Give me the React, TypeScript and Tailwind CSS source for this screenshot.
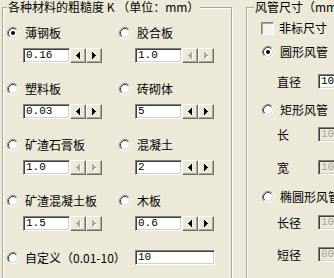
import type { ReactNode } from 'react'

const font = { fontFamily: '"Noto Sans CJK SC", "Noto Sans", sans-serif' }

function Radio({ checked }: { checked?: boolean }) {
  return (
    <svg width="12" height="12" viewBox="0 0 12 12" className="shrink-0">
      <circle cx="6" cy="6" r="5" fill="#fff" />
      <path d="M2.11 9.89A5.5 5.5 0 0 1 9.89 2.11" fill="none" stroke="#808080" />
      <path d="M9.89 2.11A5.5 5.5 0 0 1 2.11 9.89" fill="none" stroke="#fff" />
      <path d="M2.82 9.18A4.5 4.5 0 0 1 9.18 2.82" fill="none" stroke="#404040" />
      <path d="M9.18 2.82A4.5 4.5 0 0 1 2.82 9.18" fill="none" stroke="#d4d0c8" />
      {checked && <circle cx="6" cy="6" r="2" fill="#000" />}
    </svg>
  )
}

function RadioLabel({ label, checked }: { label: string; checked?: boolean }) {
  return (
    <div className="flex items-center h-[14px] text-[12px] leading-[14px] text-black whitespace-nowrap">
      <Radio checked={checked} />
      <span className="ml-[6px]">{label}</span>
    </div>
  )
}

function Arrow({ dir, on }: { dir: 'l' | 'r'; on: boolean }) {
  const cols = dir === 'l' ? [0, 1, 2, 3] : [3, 2, 1, 0]
  const draw = (fill: string, dx: number) =>
    cols.map((c, i) => (
      <rect key={fill + i} x={i + dx} y={3 - c + dx} width="1" height={c * 2 + 1} fill={fill} />
    ))
  return (
    <svg width="5" height="8" viewBox="0 0 5 8">
      {!on && draw('#fff', 1)}
      {draw(on ? '#000' : '#aca899', 0)}
    </svg>
  )
}

function SpinButton({ children }: { children: ReactNode }) {
  return (
    <div className="w-[16px] h-[15px] flex items-center justify-center bg-[#ece9d8] border border-t-white border-l-white border-b-[#716f64] border-r-[#716f64] shadow-[inset_-1px_-1px_0_#aca899]">
      {children}
    </div>
  )
}

function Box({ value, w, disabled }: { value: string; w: string; disabled?: boolean }) {
  return (
    <div
      className={`${w} h-[15px] shrink-0 flex items-center pl-[2px] border border-t-[#808080] border-l-[#808080] border-b-white border-r-white shadow-[inset_1px_1px_0_#404040,inset_-1px_-1px_0_#d4d0c8] text-[11px] leading-[13px] ${
        disabled ? 'bg-[#ece9d8] text-[#aca899]' : 'bg-white text-black'
      }`}
      style={{ fontFamily: '"Liberation Mono", monospace' }}
    >
      {value}
    </div>
  )
}

function Spinner({ value, on }: { value: string; on: boolean }) {
  return (
    <div className="flex ml-[16px] mt-[8px]">
      <Box value={value} w="w-[47px]" />
      <SpinButton>
        <Arrow dir="l" on={on} />
      </SpinButton>
      <SpinButton>
        <Arrow dir="r" on={on} />
      </SpinButton>
    </div>
  )
}

const materials = [
  [
    { label: '薄钢板', value: '0.16', on: true, checked: true },
    { label: '胶合板', value: '1.0', on: false },
  ],
  [
    { label: '塑料板', value: '0.03', on: true },
    { label: '砖砌体', value: '5', on: true },
  ],
  [
    { label: '矿渣石膏板', value: '1.0', on: false },
    { label: '混凝土', value: '2', on: true },
  ],
  [
    { label: '矿渣混凝土板', value: '1.5', on: false },
    { label: '木板', value: '0.6', on: true },
  ],
]

function SizeRow({ label, value, disabled, mt }: { label: string; value: string; disabled?: boolean; mt: string }) {
  return (
    <div className={`flex items-center h-[15px] ${mt}`}>
      <span className="w-[41px] pl-[23px] box-content shrink-0 text-[12px] leading-[14px] whitespace-nowrap">{label}</span>
      <Box value={value} w="w-[60px]" disabled={disabled} />
    </div>
  )
}

export default function App() {
  return (
    <div className="w-[334px] h-[278px] overflow-hidden bg-[#ece9d8] flex items-start text-black" style={font}>
      <fieldset className="ml-[2px] w-[230px] h-[300px] shrink-0 border border-[#aca899] shadow-[inset_1px_1px_0_#fff,1px_1px_0_#fff] pl-[4px]">
        <legend className="px-[1px] bg-[#ece9d8] text-[12px] leading-[14px] whitespace-nowrap">
          各种材料的粗糙度 K （单位：mm）
        </legend>
        <div className="pt-[12px] flex flex-col gap-y-[19px]">
          {materials.map((row, i) => (
            <div key={i} className="flex">
              {row.map((m) => (
                <div key={m.label} className="w-[112px] shrink-0">
                  <RadioLabel label={m.label} checked={m.checked} />
                  <Spinner value={m.value} on={m.on} />
                </div>
              ))}
            </div>
          ))}
          <div className="flex items-center h-[15px]">
            <div className="w-[112px] shrink-0">
              <RadioLabel label="自定义（0.01-10）" />
            </div>
            <div className="ml-[16px]">
              <Box value="10" w="w-[80px]" />
            </div>
          </div>
        </div>
      </fieldset>

      <fieldset className="ml-[14px] w-[120px] h-[300px] shrink-0 border border-[#aca899] shadow-[inset_1px_1px_0_#fff,1px_1px_0_#fff] pl-[7px]">
        <legend className="px-[1px] bg-[#ece9d8] text-[12px] leading-[14px] whitespace-nowrap">风管尺寸（mm）</legend>
        <div className="flex flex-col">
          <div className="flex items-center h-[14px] mt-[7px] pl-[7px] text-[12px] leading-[14px]">
            <div className="w-[13px] h-[13px] shrink-0 border border-t-[#808080] border-l-[#808080] border-b-white border-r-white shadow-[inset_1px_1px_0_#aca899] bg-[#f4f3ee]" />
            <span className="ml-[5px]">非标尺寸</span>
          </div>
          <div className="mt-[10px] pl-[8px]">
            <RadioLabel label="圆形风管" checked />
          </div>
          <SizeRow label="直径" value="10" mt="mt-[15px]" />
          <div className="mt-[14px] pl-[8px]">
            <RadioLabel label="矩形风管" />
          </div>
          <SizeRow label="长" value="10" disabled mt="mt-[10px]" />
          <SizeRow label="宽" value="10" disabled mt="mt-[18px]" />
          <div className="mt-[15px] pl-[8px]">
            <RadioLabel label="椭圆形风管" />
          </div>
          <SizeRow label="长径" value="10" disabled mt="mt-[11px]" />
          <SizeRow label="短径" value="80" disabled mt="mt-[17px]" />
        </div>
      </fieldset>
    </div>
  )
}
